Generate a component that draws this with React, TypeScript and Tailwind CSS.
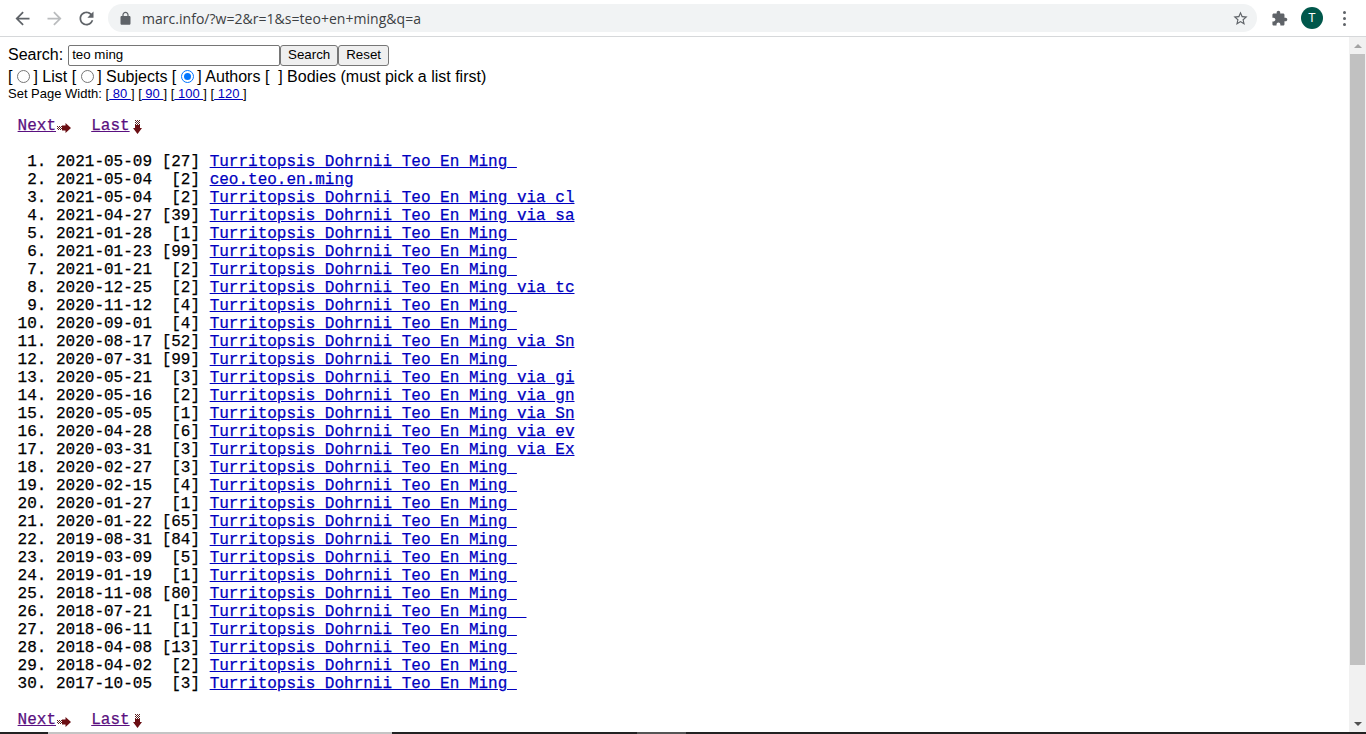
import React from "react";

const T = "Turritopsis Dohrnii Teo En Ming ";
const rows: [string, string, string][] = [
  ["2021-05-09", "[27]", T],
  ["2021-05-04", " [2]", "ceo.teo.en.ming"],
  ["2021-05-04", " [2]", T + "via cl"],
  ["2021-04-27", "[39]", T + "via sa"],
  ["2021-01-28", " [1]", T],
  ["2021-01-23", "[99]", T],
  ["2021-01-21", " [2]", T],
  ["2020-12-25", " [2]", T + "via tc"],
  ["2020-11-12", " [4]", T],
  ["2020-09-01", " [4]", T],
  ["2020-08-17", "[52]", T + "via Sn"],
  ["2020-07-31", "[99]", T],
  ["2020-05-21", " [3]", T + "via gi"],
  ["2020-05-16", " [2]", T + "via gn"],
  ["2020-05-05", " [1]", T + "via Sn"],
  ["2020-04-28", " [6]", T + "via ev"],
  ["2020-03-31", " [3]", T + "via Ex"],
  ["2020-02-27", " [3]", T],
  ["2020-02-15", " [4]", T],
  ["2020-01-27", " [1]", T],
  ["2020-01-22", "[65]", T],
  ["2019-08-31", "[84]", T],
  ["2019-03-09", " [5]", T],
  ["2019-01-19", " [1]", T],
  ["2018-11-08", "[80]", T],
  ["2018-07-21", " [1]", T + " "],
  ["2018-06-11", " [1]", T],
  ["2018-04-08", "[13]", T],
  ["2018-04-02", " [2]", T],
  ["2017-10-05", " [3]", T],
];

function Icon({ d, size, className }: { d: string; size: number; className?: string }) {
  return (
    <svg width={size} height={size} viewBox="0 0 24 24" fill="currentColor" className={className}>
      <path d={d} />
    </svg>
  );
}

function ArrowR() {
  return (
    <svg width="14" height="10" viewBox="0 0 14 10" className="block">
      <path d="M0 3h1v1H0zM2 3h1v1H2zM4 3h1v1H4zM1 4h1v1H1zM3 4h1v1H3zM0 5h1v1H0zM2 5h1v1H2zM4 5h1v1H4zM1 6h1v1H1zM3 6h1v1H3z" fill="#5a2020" />
      <path d="M5 2.5h3.5V0L14 5 8.5 10V7.5H5z" fill="#6b0f14" />
    </svg>
  );
}

function ArrowD() {
  return (
    <svg width="9" height="14" viewBox="0 0 9 14" className="block">
      <path d="M2 0h1v1H2zM4 0h1v1H4zM6 0h1v1H6zM3 1h1v1H3zM5 1h1v1H5zM2 2h1v1H2zM4 2h1v1H4zM6 2h1v1H6zM3 3h1v1H3zM5 3h1v1H5zM2 4h1v1H2zM4 4h1v1H4zM6 4h1v1H6z" fill="#5a2020" />
      <path d="M2 5h5v3h2L4.5 14 0 8h2z" fill="#6b0f14" />
    </svg>
  );
}

function Nav() {
  return (
    <div className="h-[18px] whitespace-pre text-[16px] leading-[18px] [font-family:'Liberation_Mono',monospace] [-webkit-text-stroke:0.25px]">
      {" "}
      <a href="#n" className="text-[#5a1080] underline">Next</a>
      <span className="ml-[1px] inline-block align-[-3px]"><ArrowR /></span>
      {"  "}
      <a href="#l" className="ml-[1px] text-[#5a1080] underline">Last</a>
      <span className="ml-[3px] inline-block align-[-4px]"><ArrowD /></span>
    </div>
  );
}

function Radio({ on }: { on?: boolean }) {
  return (
    <span className={"ml-[5px] mr-[3px] inline-block h-[13px] w-[13px] rounded-full border align-[-1px] " + (on ? "border-[#0075ff] bg-white p-[2px]" : "border-[#767676] bg-white")}>
      {on ? <span className="block h-[7px] w-[7px] rounded-full bg-[#0075ff]" /> : null}
    </span>
  );
}

function WidthLink({ n }: { n: string }) {
  return (
    <>
      [<a href="#w" className="whitespace-pre text-[#0000c0] underline">{" " + n + " "}</a>]{" "}
    </>
  );
}

export default function App() {
  return (
    <div className="flex h-[734px] w-[1366px] flex-col overflow-hidden bg-white [font-family:'Liberation_Sans',Arial,sans-serif]">
      <header className="flex h-[37px] shrink-0 items-center border-b border-[#d6d8da] bg-white">
        <div className="flex w-[108px] shrink-0 items-center pl-[12px]">
          <Icon size={21} className="text-[#5f6368]" d="M20 11H7.83l5.59-5.59L12 4l-8 8 8 8 1.41-1.41L7.83 13H20v-2z" />
          <Icon size={21} className="ml-[11px] text-[#babcbe]" d="M12 4l-1.41 1.41L16.17 11H4v2h12.17l-5.58 5.59L12 20l8-8z" />
          <Icon size={21} className="ml-[11px] text-[#5f6368]" d="M17.65 6.35C16.2 4.9 14.21 4 12 4c-4.42 0-7.99 3.58-7.99 8s3.57 8 7.99 8c3.73 0 6.84-2.55 7.73-6h-2.08c-.82 2.33-3.04 4-5.65 4-3.31 0-6-2.69-6-6s2.69-6 6-6c1.66 0 3.14.69 4.22 1.78L13 11h7V4l-2.35 2.35z" />
        </div>
        <div className="flex h-[28px] w-[1149px] shrink-0 items-center rounded-full bg-[#f1f3f4] pl-[10px] pr-[8px]">
          <Icon size={15} className="text-[#5f6368]" d="M18 8h-1V6c0-2.76-2.24-5-5-5S7 3.24 7 6v2H6c-1.1 0-2 .9-2 2v10c0 1.1.9 2 2 2h12c1.1 0 2-.9 2-2V10c0-1.1-.9-2-2-2zM9 6c0-1.66 1.34-3 3-3s3 1.34 3 3v2H9V6z" />
          <span className="ml-[9px] flex-1 text-[14px] tracking-[0.03px] text-[#3c4043] [font-family:'Open_Sans',sans-serif]">marc.info/?w=2&amp;r=1&amp;s=teo+en+ming&amp;q=a</span>
          <Icon size={17} className="text-[#5f6368]" d="M22 9.24l-7.19-.62L12 2 9.19 8.63 2 9.24l5.46 4.73L5.82 21 12 17.27 18.18 21l-1.63-7.03L22 9.24zM12 15.4l-3.76 2.27 1-4.28-3.32-2.88 4.38-.38L12 6.1l1.71 4.04 4.38.38-3.32 2.88 1 4.28L12 15.4z" />
        </div>
        <Icon size={17} className="ml-[14px] text-[#5f6368]" d="M20.5 11H19V7c0-1.1-.9-2-2-2h-4V3.5C13 2.12 11.88 1 10.5 1S8 2.12 8 3.5V5H4c-1.1 0-1.99.9-1.99 2v3.8H3.5c1.49 0 2.7 1.21 2.7 2.7s-1.21 2.7-2.7 2.7H2V20c0 1.1.9 2 2 2h3.8v-1.5c0-1.49 1.21-2.7 2.7-2.7 1.49 0 2.7 1.21 2.7 2.7V22H17c1.1 0 2-.9 2-2v-4h1.5c1.38 0 2.5-1.12 2.5-2.5S21.88 11 20.5 11z" />
        <div className="ml-[13px] flex h-[22px] w-[22px] items-center justify-center rounded-full bg-[#00574b] text-[12px] text-white">T</div>
        <div className="ml-[20px] flex flex-col gap-[3px]">
          <span className="h-[3px] w-[3px] rounded-full bg-[#5f6368]" />
          <span className="h-[3px] w-[3px] rounded-full bg-[#5f6368]" />
          <span className="h-[3px] w-[3px] rounded-full bg-[#5f6368]" />
        </div>
      </header>

      <div className="flex min-h-0 flex-1">
        <main className="min-w-0 flex-1 overflow-hidden pl-[8px] text-black">
          <div className="mt-[7px] flex h-[22px] items-center text-[16px]">
            <span>Search:</span>
            <span className="ml-[5px] flex h-[21px] w-[212px] items-center rounded-[2px] border border-[#767676] bg-white pl-[3px] text-[13.33px]">teo ming</span>
            <span className="flex h-[21px] w-[58px] items-center justify-center rounded-[3px] border border-[#767676] bg-[#efefef] text-[13.33px]">Search</span>
            <span className="flex h-[21px] w-[51px] items-center justify-center rounded-[3px] border border-[#767676] bg-[#efefef] text-[13.33px]">Reset</span>
          </div>
          <div className="mt-[2px] h-[18px] whitespace-pre text-[16px] leading-[18px]">
            [<Radio />] List [<Radio />] Subjects [<Radio on />] Authors [  ] Bodies (must pick a list first)
          </div>
          <div className="h-[15px] whitespace-pre text-[13px] leading-[15px]">
            Set Page Width: <WidthLink n="80" /><WidthLink n="90" /><WidthLink n="100" /><WidthLink n="120" />
          </div>
          <div className="mt-[16px]"><Nav /></div>
          <ol className="mt-[18px] list-none text-[16px] leading-[18px] [font-family:'Liberation_Mono',monospace] [-webkit-text-stroke:0.25px]">
            {rows.map((r, i) => (
              <li key={i} className="h-[18px] whitespace-pre text-black">
                {String(i + 1).padStart(3, " ") + ". " + r[0] + " " + r[1] + " "}
                <a href="#m" className="text-[#0000c0] underline">{r[2]}</a>
              </li>
            ))}
          </ol>
          <div className="mt-[18px]"><Nav /></div>
        </main>

        <aside className="flex w-[17px] shrink-0 flex-col items-center bg-[#f1f1f1]">
          <div className="flex h-[17px] w-full items-center justify-center">
            <span className="h-0 w-0 border-x-[4px] border-b-[4px] border-x-transparent border-b-[#a3a3a3]" />
          </div>
          <div className="h-[611px] w-[15px] shrink-0 bg-[#c1c1c1]" />
          <div className="flex-1" />
          <div className="flex h-[17px] w-full items-center justify-center">
            <span className="h-0 w-0 border-x-[4px] border-t-[4px] border-x-transparent border-t-[#505050]" />
          </div>
        </aside>
      </div>

      <footer className="flex h-[2px] shrink-0">
        <div className="w-[48px] bg-[#222222]" />
        <div className="w-[344px] bg-[#c4c4c4]" />
        <div className="w-[245px] bg-[#222222]" />
        <div className="w-[49px] bg-[#555555]" />
        <div className="flex-1 bg-[#222222]" />
      </footer>
    </div>
  );
}
